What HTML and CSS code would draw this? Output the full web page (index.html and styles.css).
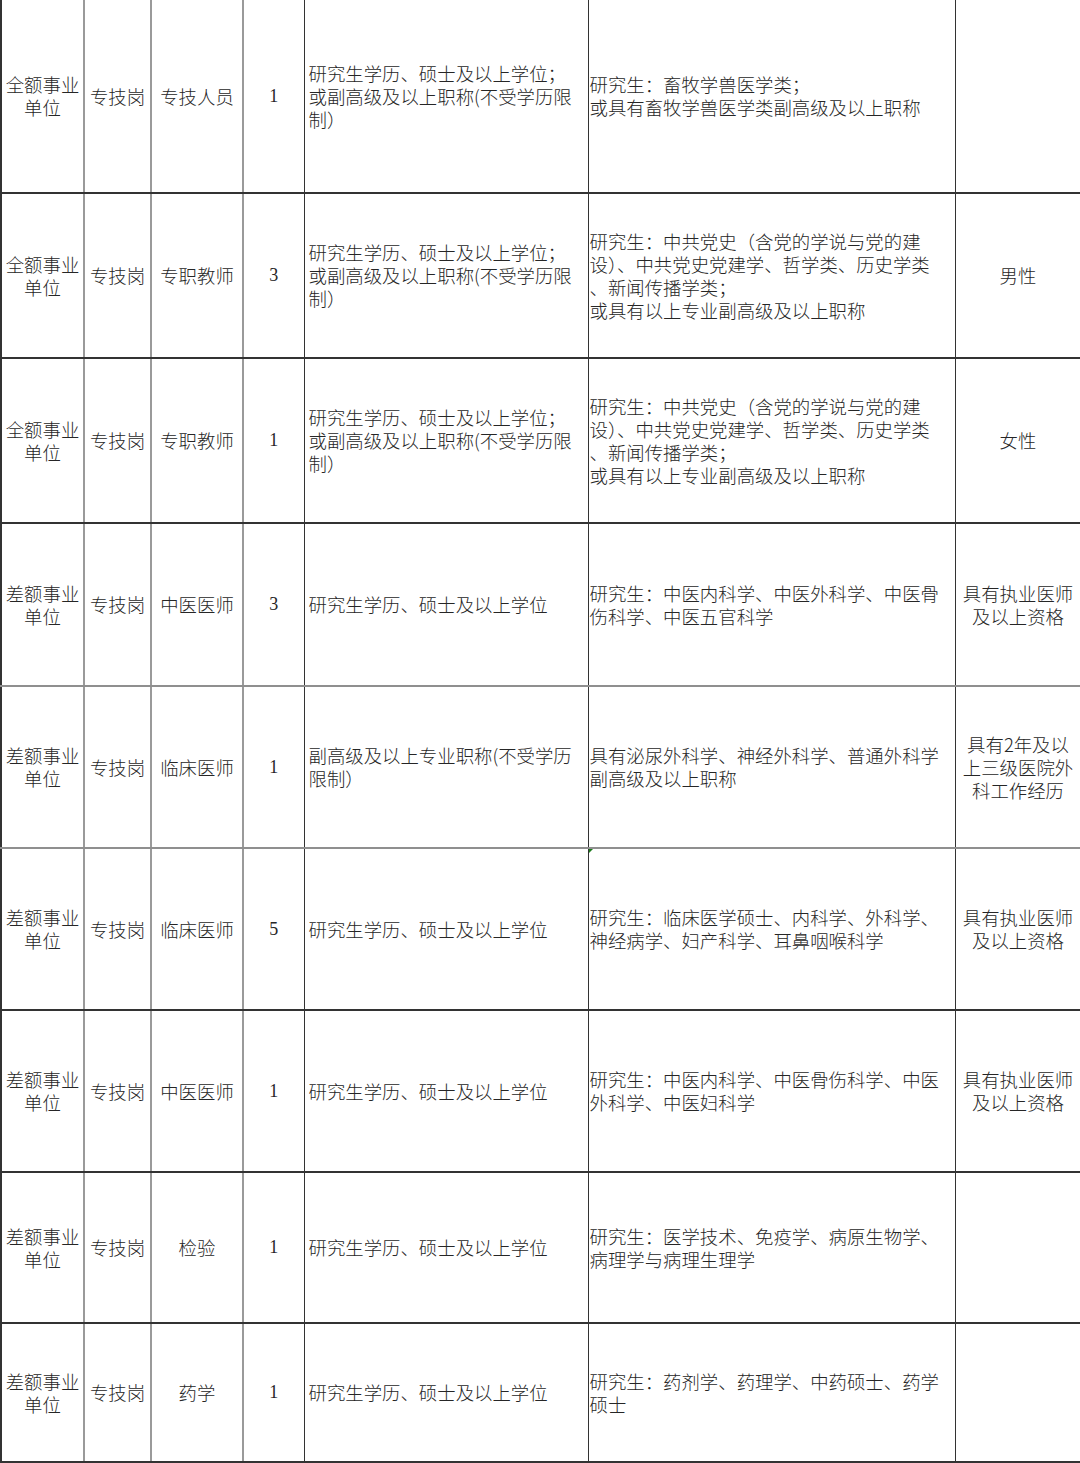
FILE: index.html
```html
<!DOCTYPE html>
<html lang="zh-CN">
<head>
<meta charset="utf-8">
<title>岗位表</title>
<link rel="stylesheet" href="styles.css">
</head>
<body>
<table class="grid">
  <colgroup>
    <col class="c1"><col class="c2"><col class="c3"><col class="c4"><col class="c5"><col class="c6"><col class="c7">
  </colgroup>
  <tbody>
    <tr class="r1">
      <td class="ctr first">全额事业<br>单位</td>
      <td class="ctr g">专技岗</td>
      <td class="ctr g">专技人员</td>
      <td class="ctr num">1</td>
      <td class="lft">研究生学历、硕士及以上学位；<br>或副高级及以上职称(不受学历限<br>制）</td>
      <td class="lft2">研究生：畜牧学兽医学类；<br>或具有畜牧学兽医学类副高级及以上职称</td>
      <td class="ctr"></td>
    </tr>
    <tr class="r2">
      <td class="ctr first">全额事业<br>单位</td>
      <td class="ctr g">专技岗</td>
      <td class="ctr g">专职教师</td>
      <td class="ctr num">3</td>
      <td class="lft">研究生学历、硕士及以上学位；<br>或副高级及以上职称(不受学历限<br>制）</td>
      <td class="lft2">研究生：中共党史（含党的学说与党的建<br>设）、中共党史党建学、哲学类、历史学类<br>、新闻传播学类；<br>或具有以上专业副高级及以上职称</td>
      <td class="ctr">男性</td>
    </tr>
    <tr class="r3">
      <td class="ctr first">全额事业<br>单位</td>
      <td class="ctr g">专技岗</td>
      <td class="ctr g">专职教师</td>
      <td class="ctr num">1</td>
      <td class="lft">研究生学历、硕士及以上学位；<br>或副高级及以上职称(不受学历限<br>制）</td>
      <td class="lft2">研究生：中共党史（含党的学说与党的建<br>设）、中共党史党建学、哲学类、历史学类<br>、新闻传播学类；<br>或具有以上专业副高级及以上职称</td>
      <td class="ctr">女性</td>
    </tr>
    <tr class="r4 gb">
      <td class="ctr first">差额事业<br>单位</td>
      <td class="ctr g">专技岗</td>
      <td class="ctr g">中医医师</td>
      <td class="ctr num">3</td>
      <td class="lft">研究生学历、硕士及以上学位</td>
      <td class="lft2">研究生：中医内科学、中医外科学、中医骨<br>伤科学、中医五官科学</td>
      <td class="ctr">具有执业医师<br>及以上资格</td>
    </tr>
    <tr class="r5 gb">
      <td class="ctr first">差额事业<br>单位</td>
      <td class="ctr g">专技岗</td>
      <td class="ctr g">临床医师</td>
      <td class="ctr num">1</td>
      <td class="lft">副高级及以上专业职称(不受学历<br>限制）</td>
      <td class="lft2">具有泌尿外科学、神经外科学、普通外科学<br>副高级及以上职称</td>
      <td class="ctr">具有2年及以<br>上三级医院外<br>科工作经历</td>
    </tr>
    <tr class="r6">
      <td class="ctr first">差额事业<br>单位</td>
      <td class="ctr g">专技岗</td>
      <td class="ctr g">临床医师</td>
      <td class="ctr num">5</td>
      <td class="lft">研究生学历、硕士及以上学位</td>
      <td class="lft2 mark-cell"><span class="mark"></span>研究生：临床医学硕士、内科学、外科学、<br>神经病学、妇产科学、耳鼻咽喉科学</td>
      <td class="ctr">具有执业医师<br>及以上资格</td>
    </tr>
    <tr class="r7">
      <td class="ctr first">差额事业<br>单位</td>
      <td class="ctr g">专技岗</td>
      <td class="ctr g">中医医师</td>
      <td class="ctr num">1</td>
      <td class="lft">研究生学历、硕士及以上学位</td>
      <td class="lft2">研究生：中医内科学、中医骨伤科学、中医<br>外科学、中医妇科学</td>
      <td class="ctr">具有执业医师<br>及以上资格</td>
    </tr>
    <tr class="r8">
      <td class="ctr first">差额事业<br>单位</td>
      <td class="ctr g">专技岗</td>
      <td class="ctr g">检验</td>
      <td class="ctr num">1</td>
      <td class="lft">研究生学历、硕士及以上学位</td>
      <td class="lft2">研究生：医学技术、免疫学、病原生物学、<br>病理学与病理生理学</td>
      <td class="ctr"></td>
    </tr>
    <tr class="r9">
      <td class="ctr first">差额事业<br>单位</td>
      <td class="ctr g">专技岗</td>
      <td class="ctr g">药学</td>
      <td class="ctr num">1</td>
      <td class="lft">研究生学历、硕士及以上学位</td>
      <td class="lft2">研究生：药剂学、药理学、中药硕士、药学<br>硕士</td>
      <td class="ctr"></td>
    </tr>
  </tbody>
</table>
</body>
</html>
```

FILE: styles.css
```css
html, body {
  margin: 0;
  padding: 0;
  background: #ffffff;
}

body {
  width: 1080px;
  height: 1463px;
  overflow: hidden;
  font-family: "Noto Sans CJK SC", "Liberation Serif", sans-serif;
  font-size: 18.4px;
  line-height: 23px;
  color: #262626;
}

.grid {
  width: 1080px;
  border-collapse: collapse;
  table-layout: fixed;
}

.c1 { width: 83px; }
.c2 { width: 67px; }
.c3 { width: 92px; }
.c4 { width: 61px; }
.c5 { width: 284px; }
.c6 { width: 367px; }
.c7 { width: 126px; }

.grid td {
  padding: 0;
  vertical-align: middle;
  white-space: nowrap;
  border-right: 1px solid #333333;
  border-bottom: 2px solid #333333;
  overflow: hidden;
  font-weight: 300;
}

.grid td.first {
  border-left: 2px solid #333333;
  border-right: 2px solid #9a9a9a;
}

.grid td.g {
  border-right: 2px solid #9a9a9a;
}

.grid td.num {
  font-family: "Liberation Serif", serif;
  font-size: 18px;
}

.grid tr.gb td {
  border-bottom-color: #8f8f8f;
}

.ctr {
  text-align: center;
}

.grid td.lft {
  text-align: left;
  padding-left: 4px;
}

.grid td.lft2 {
  text-align: left;
  padding-left: 1px;
}

.r1 { height: 193px; }
.r2 { height: 165px; }
.r3 { height: 165px; }
.r4 { height: 163px; }
.r5 { height: 162px; }
.r6 { height: 162px; }
.r7 { height: 162px; }
.r8 { height: 151px; }
.r9 { height: 139px; }

.mark-cell {
  position: relative;
}

.mark {
  position: absolute;
  left: 0;
  top: 0;
  width: 0;
  height: 0;
  border-top: 4px solid #1a7a1a;
  border-right: 4px solid transparent;
}
```
